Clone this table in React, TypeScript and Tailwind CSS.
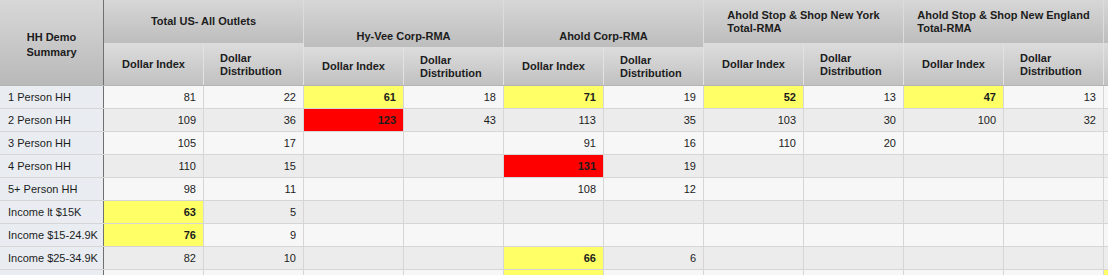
type Cell = { v?: string; hl?: "y" | "r" };

const groups: { lines: string[]; tall?: boolean }[] = [
  { lines: ["Total US- All Outlets"] },
  { lines: ["Hy-Vee Corp-RMA"], tall: true },
  { lines: ["Ahold Corp-RMA"], tall: true },
  { lines: ["Ahold Stop & Shop New York", "Total-RMA"] },
  { lines: ["Ahold Stop & Shop New England", "Total-RMA"] },
  { lines: [] },
];

const Y = (v?: string): Cell => ({ v, hl: "y" });
const R = (v: string): Cell => ({ v, hl: "r" });
const N = (v?: string): Cell => ({ v });

const rows: { label: string; cells: Cell[] }[] = [
  { label: "1 Person HH", cells: [N("81"), N("22"), Y("61"), N("18"), Y("71"), N("19"), Y("52"), N("13"), Y("47"), N("13"), N(), N()] },
  { label: "2 Person HH", cells: [N("109"), N("36"), R("123"), N("43"), N("113"), N("35"), N("103"), N("30"), N("100"), N("32"), N(), N()] },
  { label: "3 Person HH", cells: [N("105"), N("17"), N(), N(), N("91"), N("16"), N("110"), N("20"), N(), N(), N(), N()] },
  { label: "4 Person HH", cells: [N("110"), N("15"), N(), N(), R("131"), N("19"), N(), N(), N(), N(), N(), N()] },
  { label: "5+ Person HH", cells: [N("98"), N("11"), N(), N(), N("108"), N("12"), N(), N(), N(), N(), N(), N()] },
  { label: "Income lt $15K", cells: [Y("63"), N("5"), N(), N(), N(), N(), N(), N(), N(), N(), N(), N()] },
  { label: "Income $15-24.9K", cells: [Y("76"), N("9"), N(), N(), N(), N(), N(), N(), N(), N(), N(), N()] },
  { label: "Income $25-34.9K", cells: [N("82"), N("10"), N(), N(), Y("66"), N("6"), N(), N(), N(), N(), N(), N()] },
  { label: "", cells: [N(), N(), N(), N(), Y(), N(), N(), N(), N(), N(), Y(), N()] },
];

const SubHeader = ({ text }: { text?: string }) => (
  <div className="w-[100px] shrink-0 flex items-center justify-center px-[16px] border-r border-[#e2e2e2] bg-linear-to-b from-[#dcdcdc] to-[#c1c1c1]">
    <div className="text-left leading-[13px] font-bold">{text}</div>
  </div>
);

const App = () => {
  return (
    <div className="w-[1108px] h-[275px] overflow-hidden bg-white text-[11px] text-[#1c1c1c] font-['Liberation_Sans',Arial,sans-serif]">
      {/* header */}
      <div className="flex h-[86px] border-b border-[#b4b4b4]">
        <div className="w-[104px] shrink-0 flex items-center justify-center pt-[4px] border-r border-[#707070] bg-linear-to-b from-[#d8d8d8] to-[#b9b9b9] font-bold text-center leading-[15px]">
          HH Demo
          <br />
          Summary
        </div>
        {groups.map((g, gi) => (
          <div key={gi} className="w-[200px] shrink-0 flex flex-col">
            <div
              className={
                g.tall
                  ? "h-[48px] shrink-0 flex items-end justify-center pb-[4px] border-r border-b border-[#dcdcdc] bg-linear-to-b from-[#d7d7d7] to-[#bdbdbd] font-bold"
                  : "h-[44px] shrink-0 flex items-center justify-center border-r border-b border-[#dcdcdc] bg-linear-to-b from-[#d7d7d7] to-[#bdbdbd] font-bold"
              }
            >
              <div className="w-fit text-left leading-[13px]">
                {g.lines.map((l) => (
                  <div key={l}>{l}</div>
                ))}
              </div>
            </div>
            <div className="flex flex-1">
              <SubHeader text={g.lines.length ? "Dollar Index" : undefined} />
              <SubHeader text={g.lines.length ? "Dollar Distribution" : undefined} />
            </div>
          </div>
        ))}
      </div>

      {/* rows */}
      {rows.map((r, i) => (
        <div key={i} className={i % 2 === 0 ? "flex h-[23px] border-b border-[#d6d6d6] bg-[#f7f7f7]" : "flex h-[23px] border-b border-[#d6d6d6] bg-[#ececec]"}>
          <div className="w-[104px] shrink-0 flex items-center pl-[8px] border-r border-[#707070] bg-[#e9edf2]">
            {r.label}
          </div>
          {r.cells.map((c, j) => (
            <div
              key={j}
              className={
                c.hl === "y"
                  ? "w-[100px] shrink-0 flex items-center justify-end pr-[7px] border-r border-[#d6d6d6] bg-[#ffff66] font-bold"
                  : c.hl === "r"
                    ? "w-[100px] shrink-0 flex items-center justify-end pr-[7px] border-r border-[#d6d6d6] bg-[#ff0000] font-bold"
                    : "w-[100px] shrink-0 flex items-center justify-end pr-[7px] border-r border-[#d6d6d6]"
              }
            >
              {c.v}
            </div>
          ))}
        </div>
      ))}
    </div>
  );
};

export default App;
